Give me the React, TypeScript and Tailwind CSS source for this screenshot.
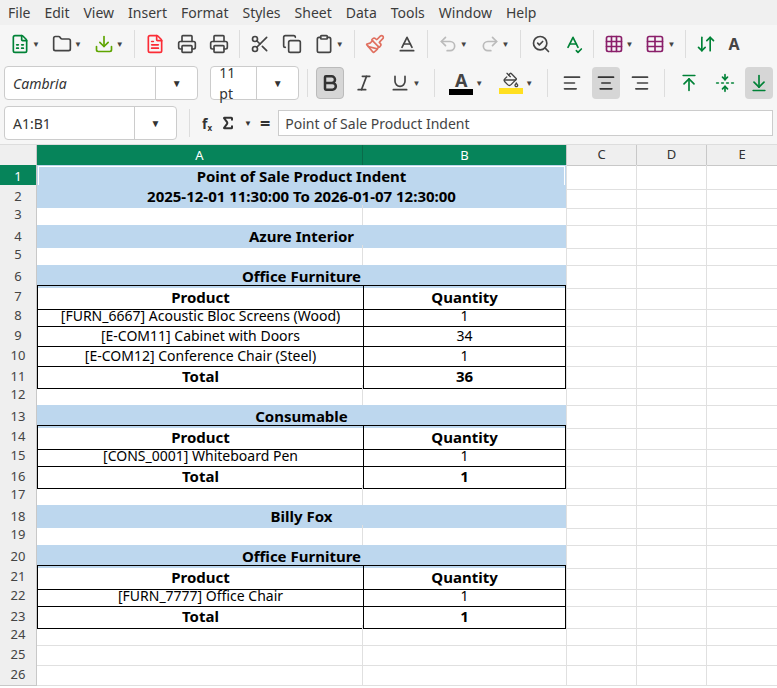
import { ChevronDown, FileSpreadsheet, Folder, Download, FileText, Printer, Scissors, Copy, Clipboard, Paintbrush, Undo2, Redo2, SearchCheck, SpellCheck, Grid3x3, Table, ArrowDownUp, Bold, Italic, Underline, AlignLeft, AlignCenter, AlignRight, ArrowUpToLine, FoldVertical, ArrowDownToLine, Baseline, PaintBucket, Sigma } from "lucide-react"

const menus = ["File", "Edit", "View", "Insert", "Format", "Styles", "Sheet", "Data", "Tools", "Window", "Help"]

type Row = { a?: string; b?: string; kind: "title" | "band" | "empty" | "head" | "item" | "total" }

const rows: Row[] = [
    { a: "Point of Sale Product Indent", kind: "title" },
    { a: "2025-12-01 11:30:00 To 2026-01-07 12:30:00", kind: "title" },
    { kind: "empty" },
    { a: "Azure Interior", kind: "title" },
    { kind: "empty" },
    { a: "Office Furniture", kind: "title" },
    { a: "Product", b: "Quantity", kind: "head" },
    { a: "[FURN_6667] Acoustic Bloc Screens (Wood)", b: "1", kind: "item" },
    { a: "[E-COM11] Cabinet with Doors", b: "34", kind: "item" },
    { a: "[E-COM12] Conference Chair (Steel)", b: "1", kind: "item" },
    { a: "Total", b: "36", kind: "total" },
    { kind: "empty" },
    { a: "Consumable", kind: "title" },
    { a: "Product", b: "Quantity", kind: "head" },
    { a: "[CONS_0001] Whiteboard Pen", b: "1", kind: "item" },
    { a: "Total", b: "1", kind: "total" },
    { kind: "empty" },
    { a: "Billy Fox", kind: "title" },
    { kind: "empty" },
    { a: "Office Furniture", kind: "title" },
    { a: "Product", b: "Quantity", kind: "head" },
    { a: "[FURN_7777] Office Chair", b: "1", kind: "item" },
    { a: "Total", b: "1", kind: "total" },
    { kind: "empty" },
    { kind: "empty" },
    { kind: "empty" },
]

const serif = "font-['Liberation_Serif',serif] font-bold text-[15px]"
const sans = "font-['Noto_Sans',sans-serif] text-[14px]"

function Tb({ children, caret }: { children: React.ReactNode; caret?: boolean }) {
    return (
        <div className="flex items-center gap-0.5 px-1.5 text-[#444]">
            {children}
            {caret && <span className="text-[8px]">▼</span>}
        </div>
    )
}

function Sep() {
    return <div className="w-px h-7 bg-[#ddd] mx-1" />
}

export default function App() {
    return (
        <div className="w-[777px] h-[688px] overflow-hidden bg-[#f6f6f6] font-['Open_Sans',sans-serif] text-[#333]">
            <div className="h-[25px] flex items-center gap-[14px] px-2 text-[14px] text-[#3c3c3c] bg-[#f0f0f0]">
                {menus.map(m => <span key={m}>{m}</span>)}
            </div>
            <div className="h-[38px] flex items-center px-1">
                <Tb caret><FileSpreadsheet size={20} className="text-green-700" /></Tb>
                <Tb caret><Folder size={20} /></Tb>
                <Tb caret><Download size={20} className="text-lime-600" /></Tb>
                <Sep />
                <Tb><FileText size={20} className="text-red-500" /></Tb>
                <Tb><Printer size={20} /></Tb>
                <Tb><Printer size={20} /></Tb>
                <Sep />
                <Tb><Scissors size={20} /></Tb>
                <Tb><Copy size={20} /></Tb>
                <Tb caret><Clipboard size={20} /></Tb>
                <Sep />
                <Tb><Paintbrush size={20} className="text-[#e07060]" /></Tb>
                <Tb><Baseline size={20} /></Tb>
                <Sep />
                <Tb caret><Undo2 size={20} className="text-[#bbb]" /></Tb>
                <Tb caret><Redo2 size={20} className="text-[#bbb]" /></Tb>
                <Sep />
                <Tb><SearchCheck size={20} /></Tb>
                <Tb><SpellCheck size={20} className="text-green-700" /></Tb>
                <Sep />
                <Tb caret><Grid3x3 size={20} className="text-[#8a1f6a]" /></Tb>
                <Tb caret><Table size={20} className="text-[#8a1f6a]" /></Tb>
                <Sep />
                <Tb><ArrowDownUp size={20} className="text-green-700" /></Tb>
                <Tb><span className="font-bold text-[16px]">A</span></Tb>
            </div>
            <div className="h-[40px] flex items-center px-1 gap-1">
                <div className="flex w-[221px] h-[34px] bg-white border border-[#ccc] rounded">
                    <div className="flex-1 flex items-center px-2 italic text-[14px]">Cambria</div>
                    <div className="w-[42px] border-l border-[#ccc] flex items-center justify-center text-[10px]">▼</div>
                </div>
                <div className="flex w-[101px] h-[34px] ml-2 bg-white border border-[#ccc] rounded">
                    <div className="flex-1 flex items-center px-2 text-[14px]">11 pt</div>
                    <div className="w-[42px] border-l border-[#ccc] flex items-center justify-center text-[10px]">▼</div>
                </div>
                <Sep />
                <div className="w-[32px] h-[32px] rounded bg-[#d6d6d6] border border-[#bbb] flex items-center justify-center"><Bold size={20} strokeWidth={3} /></div>
                <Tb><Italic size={20} /></Tb>
                <Tb caret><Underline size={20} /></Tb>
                <Sep />
                <Tb caret><div className="flex flex-col items-center"><span className="font-bold text-[18px] leading-none">A</span><div className="w-6 h-1.5 bg-black" /></div></Tb>
                <Tb caret><div className="flex flex-col items-center"><PaintBucket size={16} /><div className="w-6 h-1.5 bg-yellow-300" /></div></Tb>
                <Sep />
                <Tb><AlignLeft size={20} /></Tb>
                <div className="w-[32px] h-[32px] rounded bg-[#d6d6d6] flex items-center justify-center"><AlignCenter size={20} /></div>
                <Tb><AlignRight size={20} /></Tb>
                <Sep />
                <Tb><ArrowUpToLine size={20} className="text-green-700" /></Tb>
                <Tb><FoldVertical size={20} className="text-green-700" /></Tb>
                <div className="w-[32px] h-[32px] rounded bg-[#d6d6d6] flex items-center justify-center"><ArrowDownToLine size={20} className="text-green-700" /></div>
            </div>
            <div className="h-[40px] flex items-center px-1 gap-2">
                <div className="flex w-[173px] h-[34px] bg-white border border-[#ccc] rounded">
                    <div className="flex-1 flex items-center px-2 text-[14px]">A1:B1</div>
                    <div className="w-[42px] border-l border-[#ccc] flex items-center justify-center text-[10px]">▼</div>
                </div>
                <Sep />
                <span className="text-[14px] font-bold">f<sub className="text-[8px]">x</sub></span>
                <Sigma size={16} strokeWidth={3} />
                <span className="text-[8px]">▼</span>
                <span className="text-[18px] font-bold">=</span>
                <div className="flex-1 h-[26px] bg-white border border-[#ccc] flex items-center px-1.5 text-[14px] text-[#444]">Point of Sale Product Indent</div>
            </div>
            <div className="bg-white h-[548px] border-t border-[#ddd] mt-[1px]">
                <div className="grid grid-cols-[37px_326px_203px_70px_70px_71px] h-[20px] text-[13px]">
                    <div className="bg-[#efefef] border-r border-b border-[#c8c8c8]" />
                    <div className="bg-[#06845a] text-white flex items-center justify-center border-r border-[#0a6b4a]">A</div>
                    <div className="bg-[#06845a] text-white flex items-center justify-center">B</div>
                    {["C", "D", "E"].map(c => (
                        <div key={c} className="bg-[#efefef] flex items-center justify-center border-l border-b border-[#c8c8c8]">{c}</div>
                    ))}
                </div>
                {rows.map((r, i) => {
                    const merged = r.kind === "title"
                    const band = merged && r.a
                    const boxed = r.kind === "head" || r.kind === "item" || r.kind === "total"
                    const font = r.kind === "item" ? sans : serif
                    return (
                        <div key={i} className="grid grid-cols-[37px_326px_203px_70px_70px_71px] h-[20px]">
                            <div className={`flex items-center justify-center text-[13px] border-b border-r border-[#c8c8c8] ${i === 0 ? "bg-[#06845a] text-white" : "bg-[#efefef] text-[#444]"}`}>{i + 1}</div>
                            {merged ? (
                                <div className={`col-span-2 flex items-center justify-center text-black ${serif} ${band ? "bg-[#bdd7ee] border-b border-white" : "border-b border-[#e0e0e0]"} ${i === 0 ? "outline outline-1 outline-white -outline-offset-2 border-b-2 border-b-[#06845a]" : ""}`}>{r.a}</div>
                            ) : boxed ? (
                                <>
                                    <div className={`flex items-center justify-center text-black border-l border-b border-black ${font} ${r.kind === "head" ? "border-t" : ""}`}>{r.a}</div>
                                    <div className={`flex items-center justify-center text-black border-l border-r border-b border-black ${font} ${r.kind === "head" ? "border-t" : ""}`}>{r.b}</div>
                                </>
                            ) : (
                                <>
                                    <div className="border-r border-b border-[#e0e0e0]" />
                                    <div className="border-b border-[#e0e0e0]" />
                                </>
                            )}
                            <div className="border-l border-b border-[#e0e0e0]" />
                            <div className="border-l border-b border-[#e0e0e0]" />
                            <div className="border-l border-b border-[#e0e0e0]" />
                        </div>
                    )
                })}
            </div>
        </div>
    )
}
